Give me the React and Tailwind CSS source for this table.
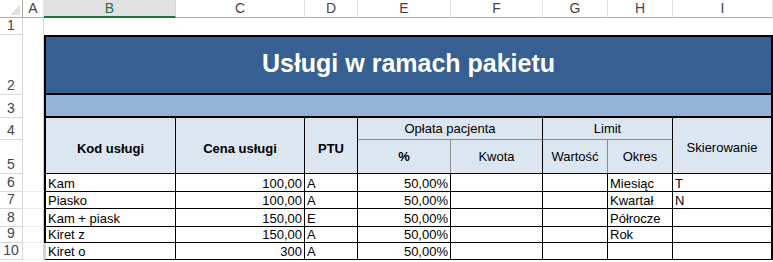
import React from "react";

const cols = ["A", "B", "C", "D", "E", "F", "G", "H", "I"];

const rows = [
  { n: "6", kod: "Kam", cena: "100,00", ptu: "A", pct: "50,00%", okres: "Miesiąc", skier: "T" },
  { n: "7", kod: "Piasko", cena: "100,00", ptu: "A", pct: "50,00%", okres: "Kwartał", skier: "N" },
  { n: "8", kod: "Kam + piask", cena: "150,00", ptu: "E", pct: "50,00%", okres: "Półrocze", skier: "" },
  { n: "9", kod: "Kiret z", cena: "150,00", ptu: "A", pct: "50,00%", okres: "Rok", skier: "" },
  { n: "10", kod: "Kiret o", cena: "300", ptu: "A", pct: "50,00%", okres: "", skier: "", last: true },
];

// nagłówek wiersza (numer po lewej)
function RowHead({ n }) {
  return (
    <div className="flex items-end justify-center border-r border-b border-[#d9d9d9] bg-white pb-[1px] text-[14px] leading-[15px] text-[#444]">
      {n}
    </div>
  );
}

function Cell({ children, className = "" }) {
  return (
    <div className={"flex items-end overflow-hidden whitespace-nowrap px-[2px] text-[13px] leading-[15px] text-black " + className}>
      {children}
    </div>
  );
}

export default function App() {
  return (
    <div className="h-[262px] w-[773px] overflow-hidden bg-white font-['Liberation_Sans',Arial,sans-serif]">
      <div className="grid grid-cols-[23px_21px_132px_129px_53px_93px_92px_65px_65px_100px] grid-rows-[18px_17px_60px_23px_22px_34px_18px_17px_18px_16px_17px]">
        {/* nagłówki kolumn */}
        <div className="relative border-r border-b border-[#ababab] bg-white">
          <svg className="absolute right-[2px] bottom-[2px]" width="10" height="10" viewBox="0 0 10 10">
            <polygon points="10,0 10,10 0,10" fill="#dfdfdf" />
          </svg>
        </div>
        {cols.map((c) =>
          c === "B" ? (
            <div key={c} className="flex items-center justify-center border-r border-b-2 border-r-[#d4d4d4] border-b-[#217346] bg-[#e1e1e1] text-[14px] text-[#217346]">
              {c}
            </div>
          ) : (
            <div key={c} className="flex items-center justify-center border-r border-b border-r-[#e1e1e1] border-b-[#ababab] bg-white text-[14px] text-[#444]">
              {c}
            </div>
          )
        )}

        {/* wiersz 1 */}
        <RowHead n="1" />
        <div className="border-r border-[#d4d4d4]" />
        <div className="col-span-8" />

        {/* wiersz 2 - tytuł */}
        <RowHead n="2" />
        <div className="border-r border-[#d4d4d4]" />
        <div className="col-span-8 flex items-center justify-center border-2 border-black bg-[#366092] pb-[2px] text-[25px] font-bold text-white">
          Usługi w ramach pakietu
        </div>

        {/* wiersz 3 */}
        <RowHead n="3" />
        <div className="border-r border-[#d4d4d4]" />
        <div className="col-span-8 border-x-2 border-b-2 border-black bg-[#95b3d7]" />

        {/* wiersze 4-5 - nagłówek tabeli */}
        <RowHead n="4" />
        <div className="border-r border-[#d4d4d4]" />
        <div className="row-span-2 flex items-center justify-center border-l-2 border-r border-b border-black bg-[#dce6f1] pt-[6px] text-[13px] font-bold">
          Kod usługi
        </div>
        <div className="row-span-2 flex items-center justify-center border-r border-b border-black bg-[#dce6f1] pt-[6px] text-[13px] font-bold">
          Cena usługi
        </div>
        <div className="row-span-2 flex items-center justify-center border-r border-b border-black bg-[#dce6f1] pt-[6px] text-[13px] font-bold">
          PTU
        </div>
        <div className="col-span-2 flex items-center justify-center border-r border-b border-r-black border-b-[#8c8c8c] bg-[#dce6f1] text-[13px]">
          Opłata pacjenta
        </div>
        <div className="col-span-2 flex items-center justify-center border-r border-b border-r-black border-b-[#8c8c8c] bg-[#dce6f1] text-[13px]">
          Limit
        </div>
        <div className="row-span-2 flex items-center justify-center border-r-2 border-b border-black bg-[#dce6f1] pt-[5px] text-[13px]">
          Skierowanie
        </div>

        <RowHead n="5" />
        <div className="border-r border-[#d4d4d4]" />
        <div className="flex items-center justify-center border-r border-b border-r-[#8c8c8c] border-b-black bg-[#dce6f1] text-[13px] font-bold">
          %
        </div>
        <div className="flex items-center justify-center border-r border-b border-black bg-[#dce6f1] text-[13px]">
          Kwota
        </div>
        <div className="flex items-center justify-center border-r border-b border-r-[#8c8c8c] border-b-black bg-[#dce6f1] text-[13px]">
          Wartość
        </div>
        <div className="flex items-center justify-center border-r border-b border-black bg-[#dce6f1] text-[13px]">
          Okres
        </div>

        {/* dane */}
        {rows.map((r) => (
          <React.Fragment key={r.n}>
            <RowHead n={r.n} />
            <div className="border-r border-b border-[#eeeeee] border-r-[#d4d4d4]" />
            <Cell className={"border-l-2 border-r border-b border-black " + (r.last ? "border-l-[#d4d4d4]" : "")}>{r.kod}</Cell>
            <Cell className="justify-end border-r border-b border-black">{r.cena}</Cell>
            <Cell className="border-r border-b border-black">{r.ptu}</Cell>
            <Cell className="justify-end border-r border-b border-black">{r.pct}</Cell>
            <Cell className="border-r border-b border-black" />
            <Cell className="border-r border-b border-black" />
            <Cell className="border-r border-b border-black">{r.okres}</Cell>
            <Cell className="border-r-2 border-b border-black">{r.skier}</Cell>
          </React.Fragment>
        ))}
      </div>
    </div>
  );
}
